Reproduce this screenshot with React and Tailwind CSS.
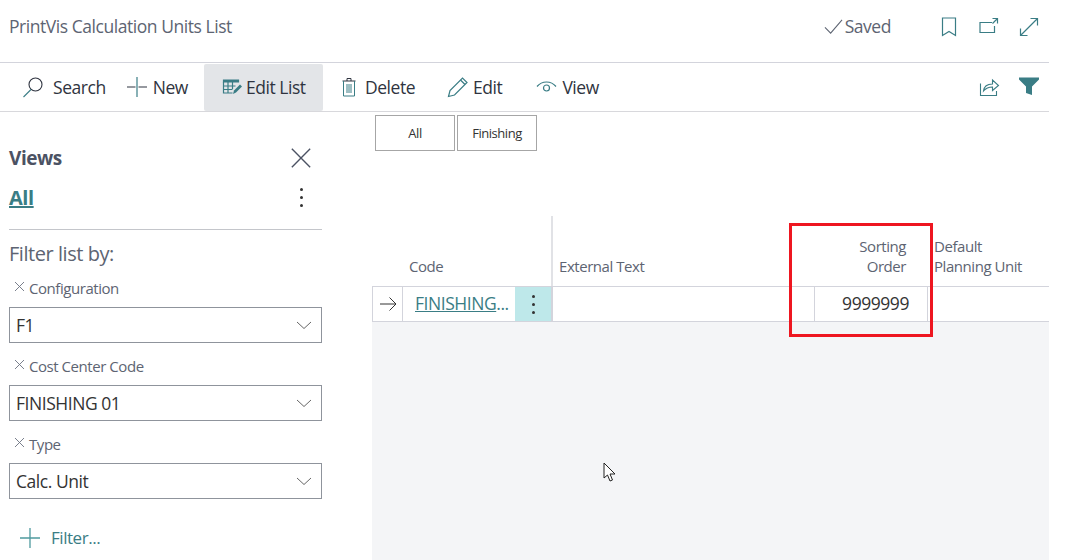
const TEAL = '#3a7d85';

function Icon({ size = 20, children, className = '', fill = 'none', vb = 20, sw = 1.1 }) {
  return (
    <svg width={size} height={size} viewBox={`0 0 ${vb} ${vb}`} fill={fill} stroke="currentColor" strokeWidth={sw} className={`shrink-0 ${className}`}>
      {children}
    </svg>
  );
}

function ToolButton({ icon, label, className = '' }) {
  return (
    <div className={`flex items-center h-full text-[17.5px] text-[#2f3440] ${className}`}>
      {icon}
      <span>{label}</span>
    </div>
  );
}

function FilterField({ label, value }) {
  return (
    <div>
      <div className="flex items-center h-[20px] text-[15px] text-[#5d6472]">
        <Icon size={11} vb={11} className="ml-[5px] mr-[4px] mb-[3px] text-[#6b7280]" sw={0.9}>
          <path d="M1 1l9 9M10 1l-9 9" />
        </Icon>
        {label}
      </div>
      <div className="mt-[9px] w-[313px] h-[36px] border border-[#8f949c] flex items-center justify-between pl-[6px] pr-[9px] text-[17.5px] text-[#333]">
        <span>{value}</span>
        <Icon size={16} vb={16} className="text-[#666]" sw={1}>
          <path d="M1 5l7 6.5L15 5" />
        </Icon>
      </div>
    </div>
  );
}

export default function App() {
  return (
    <div className="relative w-[1085px] h-[560px] overflow-hidden bg-white font-['Open_Sans','Noto_Sans',sans-serif] tracking-[-0.45px]">
      <div className="w-[1049px] h-full flex flex-col">
        <header className="h-[63px] shrink-0 border-b border-[#d3d4dc] flex items-center pl-[9px] pb-[9px] text-[#5d6472]">
          <h1 className="text-[17.5px]">PrintVis Calculation Units List</h1>
          <div className="ml-auto flex items-center text-[17.5px]">
            <Icon size={19} className="mr-[2px] text-[#5d6472]">
              <path d="M1 11l6 6L19 3" />
            </Icon>
            <span>Saved</span>
          </div>
          <div className="flex items-center ml-[48px] mr-[10px] gap-[20px]" style={{ color: TEAL }}>
            <Icon size={20} sw={1.2}><path d="M3.500 1h13v17.500L10 14.500l-6.500 4z" /></Icon>
            <Icon size={20} sw={1.2}>
              <path d="M15.500 9v6.500H1V5.500h12M13.500 1.500h5v5M18.500 1.500l-5 5" />
            </Icon>
            <Icon size={20} sw={1.2}><path d="M1.500 18.500l17-17M11.500 1.500h7v7M1.500 11.500v7h7" /></Icon>
          </div>
        </header>

        <nav className="h-[49px] shrink-0 border-b border-[#d8d8dc] flex items-center">
          <ToolButton
            className="pl-[22px]"
            label="Search"
            icon={
              <Icon size={22} vb={22} className="mr-[9px]" sw={1.1}>
                <circle cx="13.500" cy="8.500" r="6.500" stroke="#2f3440" />
                <path d="M9 13.500L1.500 21" stroke={TEAL} />
              </Icon>
            }
          />
          <ToolButton
            className="pl-[21px]"
            label="New"
            icon={
              <Icon size={20} className="mr-[6px]" sw={1.2}>
                <path d="M0 10h8.500M11.500 10H20" stroke="#2f3440" />
                <path d="M10 0v20" stroke={TEAL} />
              </Icon>
            }
          />
          <div className="ml-[16px] w-[119px] h-[47px] rounded-[2px] bg-[#e3e5e8] flex items-center pl-[18px]">
            <ToolButton
              label="Edit List"
              icon={
                <Icon size={20} className="mr-[4px]" sw={1.2}>
                  <path d="M1.500 3h15v2h-15z" fill={TEAL} stroke={TEAL} />
                  <path d="M1.500 5v11h9M1.500 9h12M1.500 12.500h9M6 5v11M10.500 5v7" stroke={TEAL} />
                  <path d="M11 17l1-3.500 6-6 2 2-6 6z" fill={TEAL} stroke="none" />
                </Icon>
              }
            />
          </div>
          <ToolButton
            className="pl-[17px]"
            label="Delete"
            icon={
              <Icon size={20} className="mr-[5px]" sw={1}>
                <path d="M2.500 4h13M7 4V1.500h4V4" stroke="#2f3440" />
                <path d="M3.500 4v15h11V4M7 7v9M9 7v9M11 7v9" stroke={TEAL} />
              </Icon>
            }
          />
          <ToolButton
            className="pl-[32px]"
            label="Edit"
            icon={
              <Icon size={22} vb={22} className="mr-[4px]" sw={1.2}>
                <path d="M1.500 20.500l1.500-6L15.500 2l4.500 4.500L7.500 19z" stroke={TEAL} />
                <path d="M13.500 4l4.500 4.500" stroke={TEAL} />
              </Icon>
            }
          />
          <ToolButton
            className="pl-[34px]"
            label="View"
            icon={
              <Icon size={21} vb={21} className="mr-[5px]" sw={1.2}>
                <path d="M1 9.500C6 3.500 15 3.500 20 9.500" stroke={TEAL} />
                <circle cx="10.500" cy="11" r="3" stroke={TEAL} />
              </Icon>
            }
          />
          <div className="ml-auto flex items-center mr-[9px] mb-[2px] gap-[18px]" style={{ color: TEAL }}>
            <Icon size={21} vb={21} sw={1.1}>
              <path d="M1.500 7.500v12h16V15" />
              <path d="M4.500 15c.5-4.500 4-7 9-7V4l6 5.500-6 5v-3.500c-4 0-6.500 1-9 4z" />
            </Icon>
            <Icon size={22} vb={22} fill="currentColor" sw={0}>
              <path d="M1 2.500h20v2l-7 7V20l-6-2v-6.500l-7-7z" />
            </Icon>
          </div>
        </nav>

        <div className="flex-1 flex min-h-0">
          <aside className="w-[372px] shrink-0 pl-[9px] pr-[50px]">
            <div className="h-[25px] mt-[34px] flex items-center justify-between text-[#4b5263] pr-[10px]">
              <h2 className="text-[19px] font-bold">Views</h2>
              <Icon size={22} vb={24} className="mb-[2px] text-[#4b5263]" sw={1.5}>
                <path d="M2 2l20 20M22 2L2 22" />
              </Icon>
            </div>
            <div className="h-[32px] mt-[12px] pb-[3px] flex items-center justify-between pr-[19px]">
              <a className="text-[20px] font-bold underline" style={{ color: TEAL }}>All</a>
              <span className="flex flex-col gap-[5px]">
                <span className="w-[3px] h-[3px] rounded-full bg-[#333]" />
                <span className="w-[3px] h-[3px] rounded-full bg-[#333]" />
                <span className="w-[3px] h-[3px] rounded-full bg-[#333]" />
              </span>
            </div>
            <div className="mt-[14px] border-t border-[#c4c6cb] w-[313px]" />
            <div className="mt-[11px] h-[26px] leading-[26px] text-[20px] text-[#5d6472]">Filter list by:</div>
            <div className="mt-[11px] flex flex-col gap-[13px]">
              <FilterField label="Configuration" value="F1" />
              <FilterField label="Cost Center Code" value="FINISHING 01" />
              <FilterField label="Type" value="Calc. Unit" />
            </div>
            <div className="mt-[26px] ml-[11px] flex items-center text-[17px]" style={{ color: TEAL }}>
              <Icon size={20} className="mr-[11px] text-[#4f9a9f]" sw={1.3}>
                <path d="M0 10h20M10 0v20" />
              </Icon>
              Filter...
            </div>
          </aside>

          <main className="flex-1 min-w-0 flex flex-col">
            <div className="h-[104px] shrink-0 pt-[3px] pl-[3px] flex gap-[2px] items-start text-[13px] text-[#333]">
              <div className="w-[80px] h-[36px] pt-[1px] border border-[#a6a6a6] flex items-center justify-center">All</div>
              <div className="w-[80px] h-[36px] pt-[1px] border border-[#a6a6a6] flex items-center justify-center">Finishing</div>
            </div>
            <div className="h-[71px] shrink-0 grid grid-cols-[181px_262px_113px_1fr] text-[15px] text-[#5d6472] leading-[20px] border-b border-[#d3d4dc]">
              <div className="border-r-2 border-[#e1e2e6] flex items-end pl-[37px] pb-[10px]">Code</div>
              <div className="flex items-end pl-[6px] pb-[10px]">External Text</div>
              <div className="flex items-end justify-end text-right pr-[22px] pb-[10px]">Sorting<br />Order</div>
              <div className="flex items-end pl-[6px] pb-[10px]">Default<br />Planning Unit</div>
            </div>
            <div className="h-[35px] shrink-0 grid grid-cols-[30px_112px_38px_262px_113px_1fr] border-b border-[#d3d4dc] border-l border-l-[#d3d4dc] text-[17.500px]">
              <div className="border-r border-[#d3d4dc] flex items-center justify-center text-[#333]">
                <Icon size={18} vb={18} sw={1}><path d="M1 9h16M10.500 2.500L17 9l-6.500 6.500" /></Icon>
              </div>
              <div className="pl-[12px] pb-[1px] flex items-center truncate" style={{ color: TEAL }}>
                <span className="underline">FINISHING</span>...
              </div>
              <div className="bg-[#bee8ea] border-r-2 border-[#d3d4dc] flex flex-col items-center justify-center gap-[5px]">
                <span className="w-[3px] h-[3px] rounded-full bg-[#333]" />
                <span className="w-[3px] h-[3px] rounded-full bg-[#333]" />
                <span className="w-[3px] h-[3px] rounded-full bg-[#333]" />
              </div>
              <div className="border-r border-[#d3d4dc]" />
              <div className="border-r border-[#d3d4dc] pb-[1px] flex items-center justify-end pr-[18px] text-[#333]">9999999</div>
              <div />
            </div>
            <div className="flex-1 bg-[#f4f5f7]" />
          </main>
        </div>
      </div>

      {/* annotation over the table */}
      <div className="absolute left-[789px] top-[223px] w-[144px] h-[114px] border-[3px] border-[#ee1620]" />
      <svg className="absolute left-[603px] top-[462px]" width="13" height="21" viewBox="0 0 13 21">
        <path d="M1 1v15l3.500-3 2.500 6 2.500-1-2.500-6H12z" fill="#fff" stroke="#222" strokeWidth="1" />
      </svg>
    </div>
  );
}
